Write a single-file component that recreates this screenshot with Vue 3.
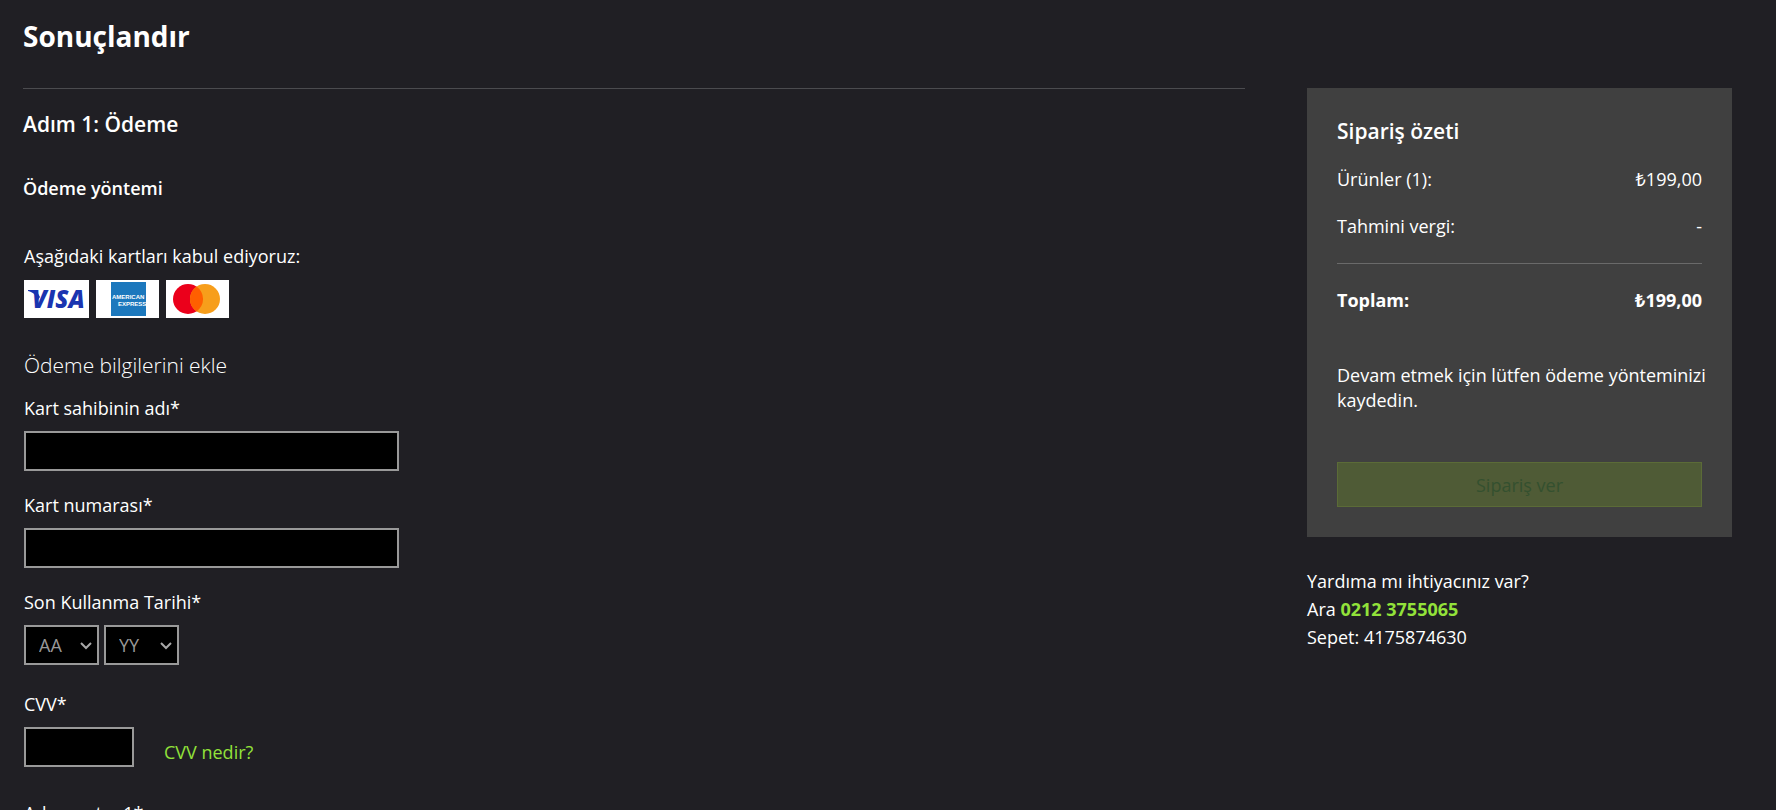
<script setup>
import { ref } from 'vue'

const holder = ref('')
const number = ref('')
const month = ref('')
const year = ref('')
const cvv = ref('')
const address = ref('')
</script>

<template>
  <div class="page">
    <h1 class="title">Sonuçlandır</h1>
    <div class="columns">
      <main class="steps">
        <h2 class="step-title">Adım 1: Ödeme</h2>
        <h3 class="method-title">Ödeme yöntemi</h3>

        <form class="payment" @submit.prevent>
          <p class="accepted">Aşağıdaki kartları kabul ediyoruz:</p>
          <ul class="cards">
            <li class="card visa">
              <svg viewBox="0 0 65 38" role="img" aria-label="Visa">
                <text x="8" y="28" class="visa-text">VISA</text>
                <path d="M4 10h8l4 7-2 3C12 15 9 12 4 11z" fill="#1a34b0" />
              </svg>
            </li>
            <li class="card">
              <svg viewBox="0 0 63 38" role="img" aria-label="American Express">
                <rect x="15" y="2" width="35" height="34" fill="#1c78bd" />
                <text x="16" y="19" class="amex-text">AMERICAN</text>
                <text x="22" y="26" class="amex-text">EXPRESS</text>
              </svg>
            </li>
            <li class="card">
              <svg viewBox="0 0 63 38" role="img" aria-label="Mastercard">
                <circle cx="22" cy="19" r="15" fill="#eb001b" />
                <circle cx="39" cy="19" r="15" fill="#f79e1b" />
                <path d="M30.500 6.600a15 15 0 0 1 0 24.800a15 15 0 0 1 0-24.800z" fill="#ff5f00" />
              </svg>
            </li>
          </ul>

          <h4 class="add-title">Ödeme bilgilerini ekle</h4>

          <div class="field">
            <label for="holder">Kart sahibinin adı*</label>
            <input id="holder" v-model="holder" type="text" class="box wide" />
          </div>
          <div class="field">
            <label for="number">Kart numarası*</label>
            <input id="number" v-model="number" type="text" class="box wide" />
          </div>
          <div class="field expiry">
            <label for="month">Son Kullanma Tarihi*</label>
            <div class="selects">
              <span class="select">
                <select id="month" v-model="month" class="box">
                  <option value="">AA</option>
                </select>
                <svg class="chevron" viewBox="0 0 12 8"><path d="M1 1l5 5 5-5" /></svg>
              </span>
              <span class="select">
                <select id="year" v-model="year" class="box" aria-label="YY">
                  <option value="">YY</option>
                </select>
                <svg class="chevron" viewBox="0 0 12 8"><path d="M1 1l5 5 5-5" /></svg>
              </span>
            </div>
          </div>
          <div class="field security">
            <label for="cvv">CVV*</label>
            <div class="cvv-row">
              <input id="cvv" v-model="cvv" type="text" class="box short" />
              <a href="#cvv">CVV nedir?</a>
            </div>
          </div>
          <div class="field">
            <label for="address">Adres satırı 1*</label>
            <input id="address" v-model="address" type="text" class="box wide" />
          </div>
        </form>
      </main>

      <aside class="side">
        <section class="summary">
          <h2 class="summary-title">Sipariş özeti</h2>
          <dl class="lines">
            <div class="line"><dt>Ürünler (1):</dt><dd>₺199,00</dd></div>
            <div class="line"><dt>Tahmini vergi:</dt><dd>-</dd></div>
            <div class="line total"><dt>Toplam:</dt><dd>₺199,00</dd></div>
          </dl>
          <p class="notice">Devam etmek için lütfen ödeme yönteminizi kaydedin.</p>
          <button type="button" class="order" disabled>Sipariş ver</button>
        </section>
        <div class="help">
          <p>Yardıma mı ihtiyacınız var?</p>
          <p>Ara <a href="tel:02123755065">0212 3755065</a></p>
          <p>Sepet: 4175874630</p>
        </div>
      </aside>
    </div>
  </div>
</template>

<style>
html {
  background: #201f24;
  scrollbar-width: none;
}
</style>

<style scoped>
.page {
  box-sizing: border-box;
  height: 100vh;
  overflow: hidden;
  padding: 14px 44px 0 23px;
  background: #201f24;
  color: #fff;
  font-family: "Open Sans", "Noto Sans", sans-serif;
  font-size: 18px;
  line-height: 25px;
}
h1, h2, h3, h4, p, ul, dl, dd { margin: 0; padding: 0; }
a { color: #92e23a; text-decoration: none; }
.title { font-size: 28px; line-height: 44px; font-weight: 700; }
.columns {
  display: grid;
  grid-template-columns: minmax(0, 1fr) 425px;
  column-gap: 62px;
  align-items: start;
  margin-top: 30px;
}
.steps { border-top: 1px solid #4b4b4f; padding-top: 19px; }
.step-title { font-size: 21px; line-height: 32px; font-weight: 600; }
.method-title { margin-top: 36px; font-size: 18px; font-weight: 600; }
.payment { margin-top: 43px; padding-left: 1px; }
.cards { display: flex; gap: 7px; margin-top: 11px; list-style: none; }
.card { width: 63px; height: 38px; background: #fff; }
.card.visa { width: 65px; }
.card svg { display: block; width: 100%; height: 100%; }
.visa-text {
  font: italic 800 24px "Open Sans", sans-serif;
  fill: #1a34b0;
}
.amex-text {
  font: 700 6px "Liberation Sans", sans-serif;
  fill: #fff;
}
.add-title { margin-top: 31px; font-size: 21px; line-height: 32px; font-weight: 300; }
.field { display: flex; flex-direction: column; gap: 10px; margin-bottom: 22px; }
.add-title + .field { margin-top: 15px; }
.field.expiry { margin-bottom: 27px; }
.field.security { margin-bottom: 34px; }
.box {
  box-sizing: border-box;
  height: 40px;
  border: 2px solid #999;
  border-radius: 0;
  background: #000;
  color: #999;
  font: inherit;
  outline: 0;
}
.wide { width: 375px; }
.short { width: 110px; }
.selects { display: flex; gap: 5px; }
.select { position: relative; }
.select .box { display: block; width: 75px; padding: 0 13px; appearance: none; }
.chevron {
  position: absolute;
  right: 7px;
  top: 17px;
  width: 12px;
  height: 8px;
  fill: none;
  stroke: #a8a8a8;
  stroke-width: 2;
  pointer-events: none;
}
.cvv-row { display: flex; align-items: flex-end; gap: 30px; }
.cvv-row a { padding-bottom: 2px; }
.summary { padding: 27px 20px 30px 30px; background: #404040; }
.summary-title { font-size: 21px; line-height: 32px; font-weight: 600; }
.lines { margin: 20px 10px 0 0; }
.line { display: flex; justify-content: space-between; margin-bottom: 22px; }
.total { margin: 24px 0 0; padding-top: 24px; border-top: 1px solid #6a6a6a; font-weight: 700; }
.notice { margin-top: 50px; }
.order {
  display: block;
  width: calc(100% - 10px);
  height: 45px;
  margin-top: 49px;
  padding: 2px 0 0;
  border: 1px solid #5b6b37;
  background: #4f5b36;
  color: #34502f;
  font: inherit;
}
.help { margin-top: 30px; line-height: 28px; }
.help a { font-weight: 700; }
</style>
